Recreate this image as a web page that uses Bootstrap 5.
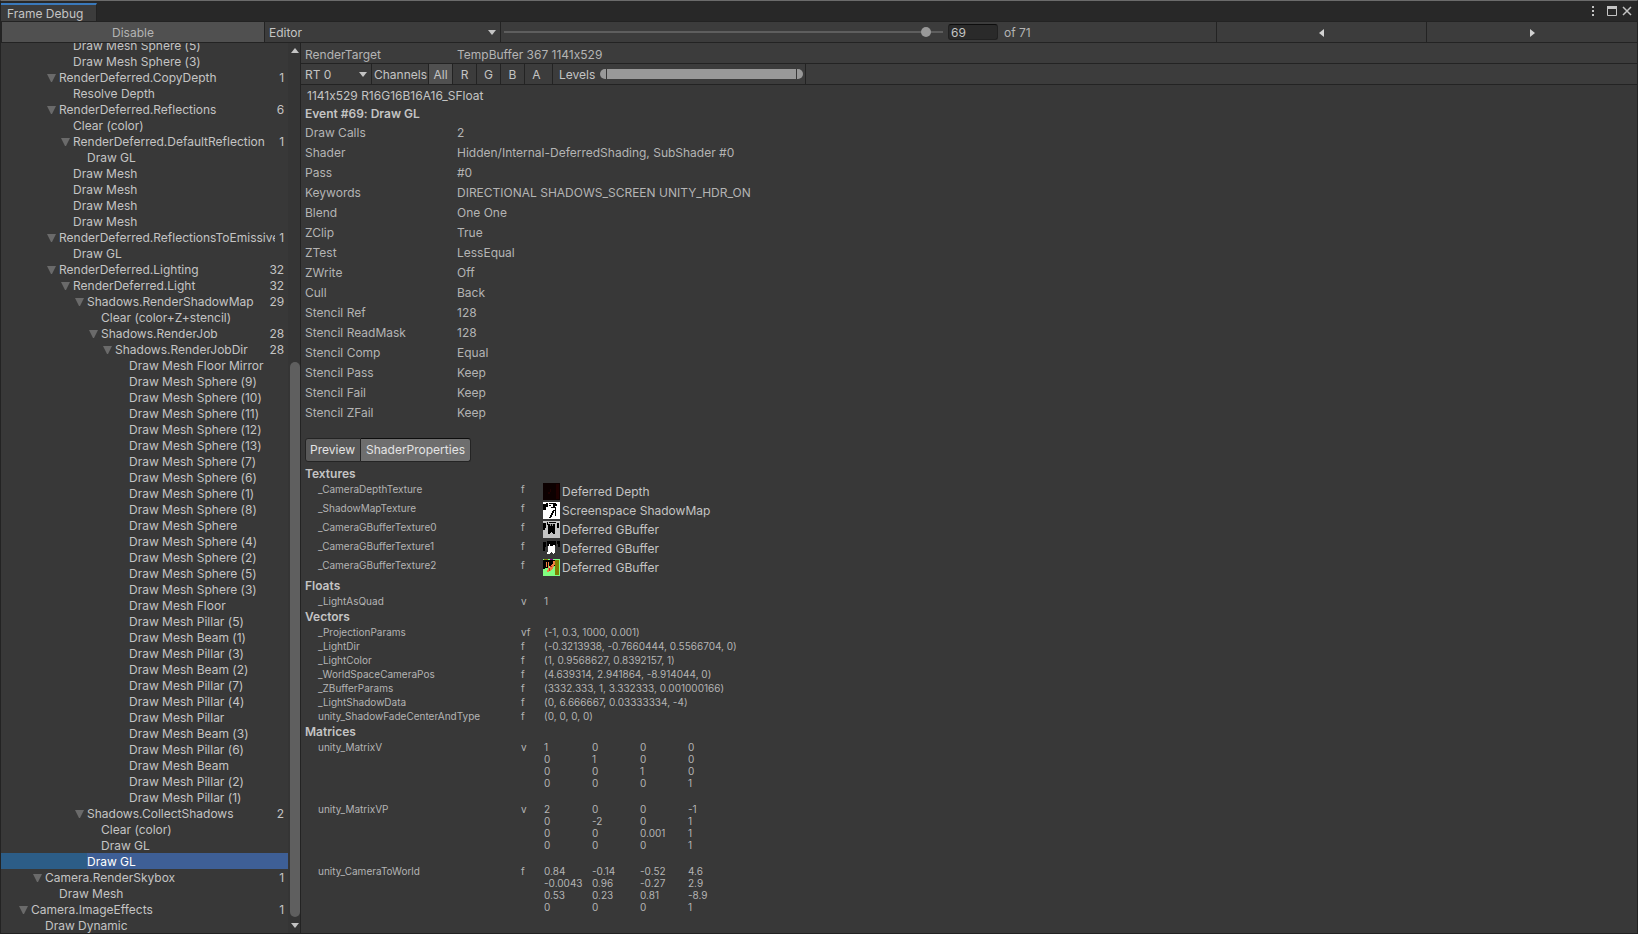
<!DOCTYPE html>
<html lang="en">
<head>
<meta charset="utf-8">
<meta name="viewport" content="width=device-width, initial-scale=1">
<title>Frame Debug</title>
<link href="https://cdn.jsdelivr.net/npm/bootstrap@5.3.0/dist/css/bootstrap.min.css" rel="stylesheet">
<style>
:root{--line:#232323;--bar:#3c3c3c;--pane:#383838;--ink:#c4c4c4;--dim:#b4b4b4}
body{font:12px/16px Inter,"Liberation Sans",sans-serif;font-feature-settings:"calt" 0;color:var(--ink);background:var(--pane)}
.window{border:1px solid var(--line);border-top-color:#6b6b6b}
button,input,select{font:inherit;font-feature-settings:inherit;color:inherit}
button{border:0;padding:0;background:none}
.titlebar{height:21px;background:#282828;border-bottom:1px solid var(--line);padding-right:3px}
.tab-title{width:96px;height:18px;background:var(--bar);border-top:2px solid #3a79bb;border-right:1px solid var(--line);padding:1px 0 0 6px}
.toolbar{height:21px;background:var(--bar);border-bottom:1px solid var(--line)}
.toolbar button,.toolbar select{padding-top:2px}
.cell{border-right:1px solid var(--line)}
.btn-disable{width:264px;background:#505050;color:var(--dim);border-left:1px solid var(--line)}
.pick{position:relative}
.pick select{width:100%;height:100%;border:0;padding:2px 4px 0;background:none;appearance:none;outline:0}
.pick svg{position:absolute;right:4px;top:8px;pointer-events:none}
.pick-editor{width:236px}
.pick-rt{width:71px}
.steps{padding-left:3px;gap:5px}
.steps input[type=range]{appearance:none;background:none;height:20px;margin:0;min-width:80px}
.steps input::-webkit-slider-runnable-track{height:2px;background:#5e5e5e}
.steps input::-webkit-slider-thumb{appearance:none;width:10px;height:10px;margin-top:-4px;border-radius:50%;background:#999}
.steps input[type=text]{width:50px;height:16px;border:1px solid #212121;border-top-color:#0d0d0d;border-radius:3px;background:#2a2a2a;padding:0 2px;line-height:14px;outline:0}
.steps label{width:213px;color:var(--dim);padding:2px 0 0 1px}
.nav-step{width:210px}
.tree-pane{width:300px;border-right:1px solid var(--line)}
.tree li{height:16px;padding:2px 4px 0 0}
.tree li::before{content:"";flex:none;width:30px;height:8px}
.tree li.l1::before{width:44px}
.tree li.l2::before{width:58px}
.tree li.l3::before{width:72px}
.tree li.l4::before{width:86px}
.tree li.l5::before{width:100px}
.tree li.l6::before{width:114px}
.tree li.l7::before{width:128px}
.tree li.open::before{background:#6a6a6a;clip-path:polygon(calc(100% - 12px) 0,calc(100% - 3px) 0,calc(100% - 7px) 100%,calc(100% - 8px) 100%)}
.tree .label-text{flex:1 1 0;overflow:hidden;white-space:nowrap}
.tree .num{flex:none;padding-left:4px}
.tree li.picked{background:linear-gradient(90deg,#2c5d87 86px,#3e5f96 86px);color:#fff}
.scroller{width:12px;background:#353535;padding:4px 0 4px 1px}
.scroller .room-above{flex:307 1 0}
.scroller .thumb{flex:555 1 0;width:10px;border-radius:5px;background:#5f5f5f}
.info{padding:4px 4px 0}
.dim{color:var(--dim)}
.channels{width:57px;padding:2px 0 0 2px}
.chan{width:24px}
.chan.on{background:#505050}
.chan-last{width:28px;padding-right:4px}
.levels{padding:0 2px 0 6px;gap:5px}
.levels span{padding-top:2px}
.levels-track{width:203px;height:10px;border-radius:5px;overflow:hidden;background:#999}
.levels-track i{flex:1;border:solid var(--pane);border-width:0 1px;margin:0 6px}
.body-pane{padding:1px 4px 0}
.format{padding:2px 2px;height:20px}
table{border-collapse:collapse}
td,th{padding:0;font-weight:400}
.state{margin-top:1px;color:var(--dim)}
.state th,.info th{width:152px}
.state th{height:20px}
.tabs{margin:15px 0 4px}
.tabs button{height:24px;padding:0 5px 0 4px;border:1px solid #242424;border-radius:3px 0 0 3px;background:#585858;color:#e4e4e4}
.tabs button+button{padding:0 5px;border-left:0;border-radius:0 3px 3px 0;background:#6e6e6e;border-top-color:#0d0d0d}
h2{font-size:12px;line-height:16px;font-weight:600;margin:1px 0 0;color:var(--ink)}
.props{font-size:10px;line-height:14px;color:var(--dim)}
.props th{width:203px;padding-left:13px;vertical-align:top;box-sizing:content-box}
.props td{vertical-align:top}
.props .stage{width:23px}
.tex .stage{width:22px}
.props.tex .stage{width:22px}
.tex th,.tex td{height:19px}
.tex .obj{font-size:12px;line-height:17px;padding-top:1px;color:var(--ink)}
.tex svg{display:block;margin-right:2px;shape-rendering:crispEdges}
.mats{margin-top:1px;line-height:12px}
.mats td{width:48px}
.mats .last td{height:26px}
</style>
</head>
<body>
<div class="window vh-100 d-flex flex-column overflow-hidden">
<header class="titlebar d-flex align-items-start justify-content-between flex-shrink-0">
<div class="tab-title mt-auto">Frame Debug</div>
<div class="d-flex pt-1">
<button aria-label="Menu"><svg class="d-block" width="14" height="12" fill="#c4c4c4"><path d="M4 1h2v2H4zM4 5h2v2H4zM4 9h2v2H4z"/></svg></button>
<button aria-label="Maximize"><svg class="d-block" width="18" height="12"><path d="M5.500 1.500h9v9h-9z" fill="none" stroke="#c4c4c4"/><path d="M5 1h10v3H5z" fill="#c4c4c4"/></svg></button>
<button aria-label="Close"><svg class="d-block" width="14" height="12"><path d="M3 2l8 8M11 2l-8 8" stroke="#c4c4c4" stroke-width="1.500"/></svg></button>
</div>
</header>
<div class="toolbar d-flex flex-shrink-0">
<button class="btn-disable cell">Disable</button>
<div class="pick pick-editor cell"><select aria-label="Target"><option>Editor</option></select><svg width="8" height="5" fill="#c4c4c4"><path d="M0 0h8L4 5z"/></svg></div>
<div class="steps cell d-flex flex-fill align-items-center"><input type="range" class="flex-fill" aria-label="Event" min="0" max="71" value="69"><input type="text" id="step" value="69"><label for="step">of 71</label></div>
<button class="nav-step cell" aria-label="Previous"><svg class="d-block mx-auto" width="5" height="8" fill="#d2d2d2"><path d="M5 0v8L0 4z"/></svg></button>
<button class="nav-step" aria-label="Next"><svg class="d-block mx-auto" width="5" height="8" fill="#d2d2d2"><path d="M0 0v8l5-4z"/></svg></button>
</div>
<main class="d-flex flex-fill overflow-hidden">
<aside class="tree-pane d-flex flex-shrink-0">
<ul class="tree list-unstyled m-0 flex-fill d-flex flex-column justify-content-end overflow-hidden" id="tree"></ul>
<div class="scroller d-flex flex-column align-items-center">
<svg class="flex-shrink-0" width="8" height="8" fill="#c4c4c4"><path d="M0 6h8L4 1z"/></svg>
<div class="room-above"></div><div class="thumb"></div>
<svg class="flex-shrink-0 mt-1" width="8" height="8" fill="#c4c4c4"><path d="M0 2h8L4 7z"/></svg>
</div>
</aside>
<section class="flex-fill overflow-hidden">
<div class="toolbar info dim"><table><tr><th>RenderTarget</th><td>TempBuffer 367 1141x529</td></tr></table></div>
<div class="toolbar d-flex">
<div class="pick pick-rt cell"><select aria-label="Render target"><option>RT 0</option></select><svg width="8" height="5" fill="#c4c4c4"><path d="M0 0h8L4 5z"/></svg></div>
<div class="cell channels d-flex align-items-center">Channels</div>
<button class="chan cell on">All</button><button class="chan cell">R</button><button class="chan cell">G</button><button class="chan cell">B</button><button class="chan chan-last cell">A</button>
<div class="levels cell d-flex align-items-center"><span>Levels</span><div class="levels-track d-flex"><i></i></div></div>
</div>
<div class="body-pane">
<div class="format">1141x529 R16G16B16A16_SFloat</div>
<h2 class="m-0">Event #69: Draw GL</h2>
<table class="state">
<tr><th>Draw Calls</th><td>2</td></tr>
<tr><th>Shader</th><td>Hidden/Internal-DeferredShading, SubShader #0</td></tr>
<tr><th>Pass</th><td>#0</td></tr>
<tr><th>Keywords</th><td>DIRECTIONAL SHADOWS_SCREEN UNITY_HDR_ON</td></tr>
<tr><th>Blend</th><td>One One</td></tr>
<tr><th>ZClip</th><td>True</td></tr>
<tr><th>ZTest</th><td>LessEqual</td></tr>
<tr><th>ZWrite</th><td>Off</td></tr>
<tr><th>Cull</th><td>Back</td></tr>
<tr><th>Stencil Ref</th><td>128</td></tr>
<tr><th>Stencil ReadMask</th><td>128</td></tr>
<tr><th>Stencil Comp</th><td>Equal</td></tr>
<tr><th>Stencil Pass</th><td>Keep</td></tr>
<tr><th>Stencil Fail</th><td>Keep</td></tr>
<tr><th>Stencil ZFail</th><td>Keep</td></tr>
</table>
<div class="tabs d-flex"><button>Preview</button><button>ShaderProperties</button></div>
<h2 class="m-0">Textures</h2>
<table class="props tex">
<tr><th>_CameraDepthTexture</th><td class="stage">f</td><td class="obj"><div class="d-flex"><svg width="17" height="17"><path fill="#0c0000" d="M0 0h17v17H0z"/><path fill="#1e0000" d="M13 1h3v15h-3zM5 9h2v2H5zM7 6h1v3H7z"/></svg>Deferred Depth</div></td></tr>
<tr><th>_ShadowMapTexture</th><td class="stage">f</td><td class="obj"><div class="d-flex"><svg width="17" height="17"><path fill="#fff" d="M0 0h17v17H0z"/><path d="M0 2h3V1h2v4H3v3H0zM6 1h7v1H6zM6 3h2v1H6zM10 2h4v2h-2v1h-2zM8 5h5v1H8zM12 6h1v8h-1zM10 8h2v1h-2zM9 9h2v2H9zM8 11h2v2H8zM7 13h2v2H7zM6 15h2v1H6z"/></svg>Screenspace ShadowMap</div></td></tr>
<tr><th>_CameraGBufferTexture0</th><td class="stage">f</td><td class="obj"><div class="d-flex"><svg width="17" height="17"><path fill="#c4c4c4" d="M0 0h17v17H0z"/><path d="M0 2h3v5H2v2H0zM4 1h1v3H4zM6 1h7v1H6zM5 3h7v10h-2v-1H9v-1H8v1H7v1H5zM14 2h2v5h-2z"/><path fill="#888" d="M7 3h1v2H7zM9 3h1v2H9z"/></svg>Deferred GBuffer</div></td></tr>
<tr><th>_CameraGBufferTexture1</th><td class="stage">f</td><td class="obj"><div class="d-flex"><svg width="17" height="17"><path fill="#383838" d="M0 0h17v17H0z"/><path d="M0 2h3v5H2v4H0zM4 1h9v5H4zM14 1h3v6h-2V4h-1z"/><path fill="#fff" d="M5 6h1V4h1v2h3V5h2v8h-1v1h-1v-1H9v-1H8v1H7v1H4v-2h1z"/></svg>Deferred GBuffer</div></td></tr>
<tr><th>_CameraGBufferTexture2</th><td class="stage">f</td><td class="obj"><div class="d-flex"><svg width="17" height="17"><path fill="#80ff80" d="M0 0h17v17H0z"/><path d="M0 1h12v6H5v2H2v1H0z"/><path fill="#808000" d="M12 1h4v15h-4zM1 0h4v1H1z"/><path fill="#800080" d="M7 0h3v1H7z"/><path fill="#f08040" d="M3 3h1v5H3zM5 3h1v6h1V7h1V6h1V5h1V2h2v4h-1v2h-1v2H9v1H8v1H6v1H4v-2h1z"/><path fill="#c02020" d="M7 7h2v1H7zM6 9h1v3H6z"/></svg>Deferred GBuffer</div></td></tr>
</table>
<h2>Floats</h2>
<table class="props"><tr><th>_LightAsQuad</th><td class="stage">v</td><td>1</td></tr></table>
<h2>Vectors</h2>
<table class="props">
<tr><th>_ProjectionParams</th><td class="stage">vf</td><td>(-1, 0.3, 1000, 0.001)</td></tr>
<tr><th>_LightDir</th><td class="stage">f</td><td>(-0.3213938, -0.7660444, 0.5566704, 0)</td></tr>
<tr><th>_LightColor</th><td class="stage">f</td><td>(1, 0.9568627, 0.8392157, 1)</td></tr>
<tr><th>_WorldSpaceCameraPos</th><td class="stage">f</td><td>(4.639314, 2.941864, -8.914044, 0)</td></tr>
<tr><th>_ZBufferParams</th><td class="stage">f</td><td>(3332.333, 1, 3.332333, 0.001000166)</td></tr>
<tr><th>_LightShadowData</th><td class="stage">f</td><td>(0, 6.666667, 0.03333334, -4)</td></tr>
<tr><th>unity_ShadowFadeCenterAndType</th><td class="stage">f</td><td>(0, 0, 0, 0)</td></tr>
</table>
<h2>Matrices</h2>
<table class="props mats">
<tr><th rowspan="4">unity_MatrixV</th><td class="stage" rowspan="4">v</td><td>1</td><td>0</td><td>0</td><td>0</td></tr>
<tr><td>0</td><td>1</td><td>0</td><td>0</td></tr>
<tr><td>0</td><td>0</td><td>1</td><td>0</td></tr>
<tr class="last"><td>0</td><td>0</td><td>0</td><td>1</td></tr>
<tr><th rowspan="4">unity_MatrixVP</th><td class="stage" rowspan="4">v</td><td>2</td><td>0</td><td>0</td><td>-1</td></tr>
<tr><td>0</td><td>-2</td><td>0</td><td>1</td></tr>
<tr><td>0</td><td>0</td><td>0.001</td><td>1</td></tr>
<tr class="last"><td>0</td><td>0</td><td>0</td><td>1</td></tr>
<tr><th rowspan="4">unity_CameraToWorld</th><td class="stage" rowspan="4">f</td><td>0.84</td><td>-0.14</td><td>-0.52</td><td>4.6</td></tr>
<tr><td>-0.0043</td><td>0.96</td><td>-0.27</td><td>2.9</td></tr>
<tr><td>0.53</td><td>0.23</td><td>0.81</td><td>-8.9</td></tr>
<tr class="last"><td>0</td><td>0</td><td>0</td><td>1</td></tr>
</table>
</div>
</section>
</main>
</div>
<script>
// One entry per event: [depth, name, number of child events]
const draw = name => [7, 'Draw Mesh ' + name];
const events = [
  [3, 'Draw Mesh Sphere (5)'], [3, 'Draw Mesh Sphere (3)'],
  [2, 'RenderDeferred.CopyDepth', 1], [3, 'Resolve Depth'],
  [2, 'RenderDeferred.Reflections', 6], [3, 'Clear (color)'],
  [3, 'RenderDeferred.DefaultReflection', 1], [4, 'Draw GL'],
  [3, 'Draw Mesh'], [3, 'Draw Mesh'], [3, 'Draw Mesh'], [3, 'Draw Mesh'],
  [2, 'RenderDeferred.ReflectionsToEmissive', 1], [3, 'Draw GL'],
  [2, 'RenderDeferred.Lighting', 32], [3, 'RenderDeferred.Light', 32],
  [4, 'Shadows.RenderShadowMap', 29], [5, 'Clear (color+Z+stencil)'],
  [5, 'Shadows.RenderJob', 28], [6, 'Shadows.RenderJobDir', 28],
  ...['Floor Mirror', 'Sphere (9)', 'Sphere (10)', 'Sphere (11)', 'Sphere (12)', 'Sphere (13)',
    'Sphere (7)', 'Sphere (6)', 'Sphere (1)', 'Sphere (8)', 'Sphere', 'Sphere (4)', 'Sphere (2)',
    'Sphere (5)', 'Sphere (3)', 'Floor', 'Pillar (5)', 'Beam (1)', 'Pillar (3)', 'Beam (2)',
    'Pillar (7)', 'Pillar (4)', 'Pillar', 'Beam (3)', 'Pillar (6)', 'Beam', 'Pillar (2)', 'Pillar (1)'].map(draw),
  [4, 'Shadows.CollectShadows', 2], [5, 'Clear (color)'], [5, 'Draw GL'],
  [4, 'Draw GL', 0, true],
  [1, 'Camera.RenderSkybox', 1], [2, 'Draw Mesh'],
  [0, 'Camera.ImageEffects', 1], [1, 'Draw Dynamic'],
];
document.getElementById('tree').innerHTML = events.map(([depth, name, count, picked]) =>
  `<li class="d-flex align-items-center flex-shrink-0 l${depth}${count ? ' open' : ''}${picked ? ' picked' : ''}">` +
  `<span class="label-text">${name}</span>${count ? `<span class="num">${count}</span>` : ''}</li>`).join('');
</script>
<script src="https://cdn.jsdelivr.net/npm/bootstrap@5.3.0/dist/js/bootstrap.bundle.min.js"></script>
</body>
</html>
